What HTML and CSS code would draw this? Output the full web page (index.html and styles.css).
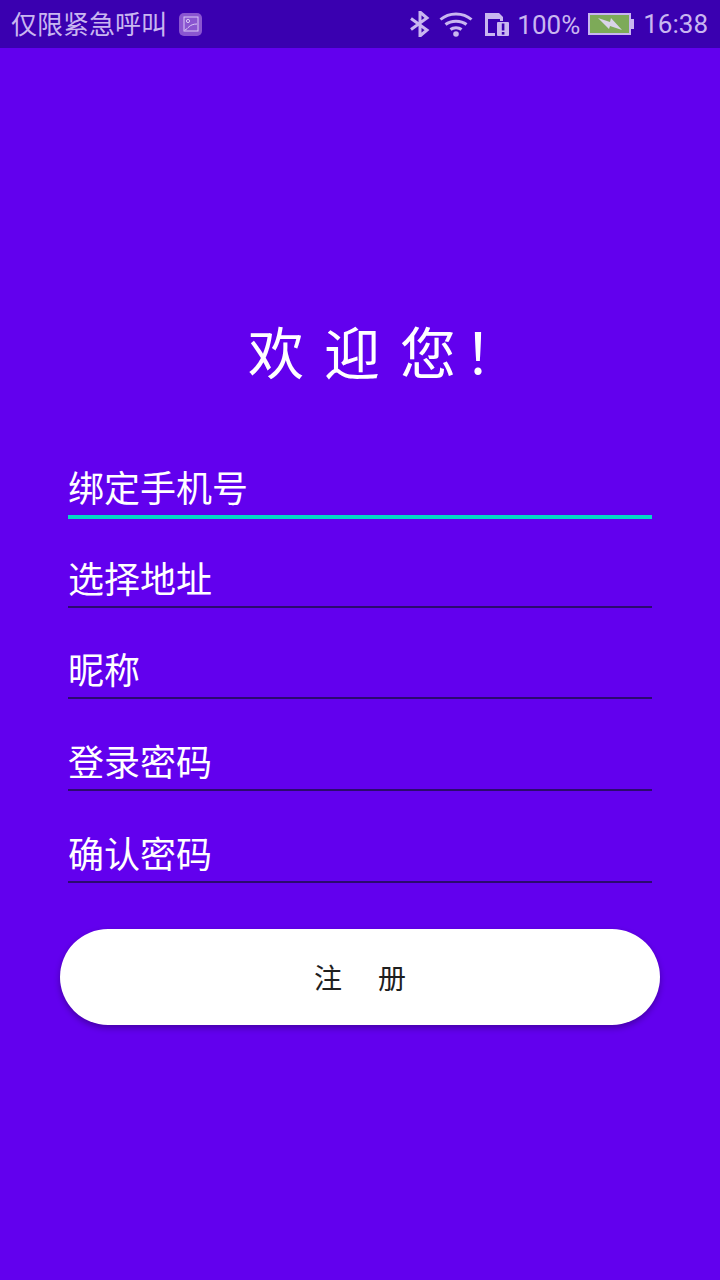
FILE: index.html
```html
<!DOCTYPE html>
<html lang="zh-CN">
<head>
    <meta charset="UTF-8">
    <meta name="viewport" content="width=device-width, initial-scale=1.0">
    <title>注册</title>
    <link rel="stylesheet" href="styles.css">
</head>
<body>
    <header class="status-bar">
        <div class="status-left">
            <span class="carrier">仅限紧急呼叫</span>
            <span class="image-badge">
                <svg width="16" height="16" viewBox="0 0 16 16" fill="none" stroke="#d9c8f5" stroke-width="1">
                    <rect x="1" y="1" width="14" height="14"/>
                    <circle cx="5" cy="5" r="1.6"/>
                    <path d="M2 14C5 13 6 8 14 8"/>
                </svg>
            </span>
        </div>
        <div class="status-right">
            <svg class="icon-bluetooth" width="20" height="26" viewBox="0 0 20 26" fill="none" stroke="#c9b6f0" stroke-width="3">
                <path d="M1 7.5L17 19L10 25V1L17 7L1 18.5"/>
            </svg>
            <svg class="icon-wifi" width="34" height="26" viewBox="0 0 34 26" fill="none" stroke="#c9b6f0" stroke-width="3">
                <path d="M1.5 8.5C10 1 24 1 32.5 8.5"/>
                <path d="M6.5 13.5C12 9 22 9 27.5 13.5"/>
                <path d="M11.5 18.5C14.5 16 19.5 16 22.5 18.5"/>
                <circle cx="17" cy="23" r="2.8" fill="#c9b6f0" stroke="none"/>
            </svg>
            <svg class="icon-sim" width="26" height="24" viewBox="0 0 26 24">
                <path d="M1 1H15L19 5V9H16V7H4V21H11V24H1Z" fill="#c9b6f0"/>
                <rect x="13" y="10" width="12" height="14" rx="1" fill="#c9b6f0"/>
                <rect x="17.8" y="11.5" width="2.6" height="7" fill="#3a00b0"/>
                <rect x="17.8" y="20" width="2.6" height="2.6" fill="#3a00b0"/>
            </svg>
            <span class="battery-pct">100%</span>
            <div class="battery">
                <div class="battery-body">
                    <svg width="24" height="14" viewBox="0 0 24 14">
                        <path d="M0 1L12 5L13 1L24 13L12 9L11 12Z" fill="#d9d4e8"/>
                    </svg>
                </div>
                <div class="battery-tip"></div>
            </div>
            <span class="clock">16:38</span>
        </div>
    </header>

    <main class="form">
        <h1 class="welcome">欢迎<span class="welcome-last">您</span>！</h1>
        <div class="field field-active">绑定手机号</div>
        <div class="field">选择地址</div>
        <div class="field">昵称</div>
        <div class="field">登录密码</div>
        <div class="field">确认密码</div>
        <button class="submit">注　册</button>
    </main>
</body>
</html>
```

FILE: styles.css
```css
body {
    font-family: Roboto, "Noto Sans CJK SC", sans-serif;
    background-color: #6200ee;
    color: #ffffff;
    margin: 0;
    height: 1280px;
    overflow: hidden;
}

.status-bar {
    height: 48px;
    background-color: #3a00b0;
    color: #c9b6f0;
    font-size: 26px;
    display: flex;
    justify-content: space-between;
    align-items: center;
    padding: 0 12px;
}

.status-left {
    display: flex;
    align-items: center;
    gap: 12px;
}

.carrier {
    margin-left: -1px;
    padding-bottom: 3px;
}

.image-badge {
    width: 23px;
    height: 23px;
    border-radius: 5px;
    background-color: #8a55d0;
    display: flex;
    justify-content: center;
    align-items: center;
}

.status-right {
    display: flex;
    align-items: center;
}

.icon-bluetooth {
    margin-right: 9px;
}

.icon-wifi {
    margin-right: 11px;
}

.icon-sim {
    margin-right: 7px;
}

.battery-pct {
    margin-right: 8px;
    padding-top: 1px;
}

.battery {
    display: flex;
    align-items: center;
    margin-right: 9px;
}

.battery-body {
    width: 39px;
    height: 18px;
    border: 2px solid #c9b6f0;
    background-color: #7daa58;
    display: flex;
    justify-content: center;
    align-items: center;
}

.battery-tip {
    width: 3px;
    height: 10px;
    background-color: #c9b6f0;
}

.form {
    padding: 262px 68px 0;
    display: flex;
    flex-direction: column;
}

.welcome {
    margin: 0 0 79px;
    height: 80px;
    padding-left: 180px;
    font-family: "Noto Sans CJK SC", sans-serif;
    font-size: 56px;
    font-weight: 400;
    line-height: 80px;
    letter-spacing: 20px;
    filter: blur(0.5px);
}

.welcome-last {
    letter-spacing: 8px;
}

.field {
    height: 42px;
    padding: 43.67px 0 4px;
    font-size: 36px;
    line-height: 42px;
    border-bottom: 2px solid #2c0a70;
}

.field-active {
    height: 46px;
    padding: 0;
    margin-bottom: -3px;
    border-bottom: 4px solid #03dac5;
}

.submit {
    margin: 46px -8px 0;
    height: 96px;
    padding-left: 10px;
    border: none;
    border-radius: 48px;
    background-color: #ffffff;
    color: #1f1f1f;
    font-family: "Noto Sans CJK SC", sans-serif;
    font-size: 28px;
    letter-spacing: 4px;
    box-shadow: 0 3px 6px rgba(0, 0, 0, 0.3);
}
```
